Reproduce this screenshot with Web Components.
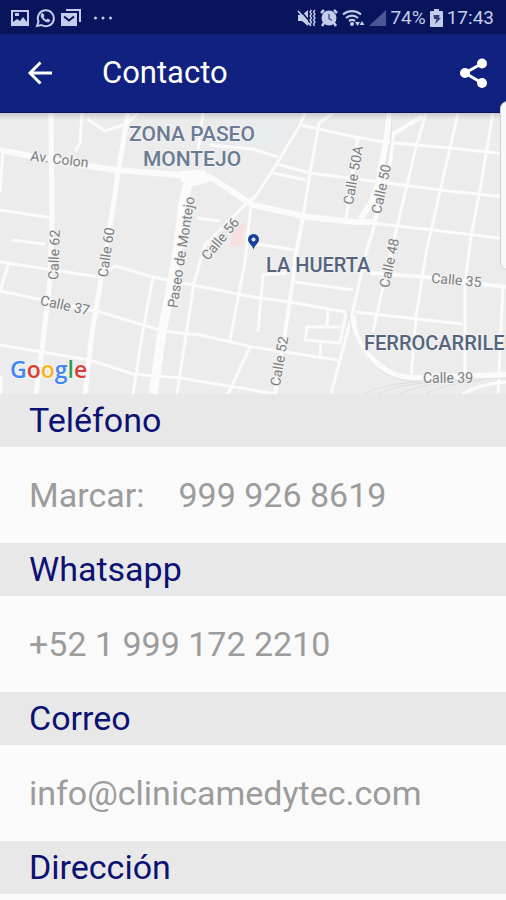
<!DOCTYPE html>
<html lang="es">
<head>
<meta charset="utf-8">
<meta name="viewport" content="width=device-width, initial-scale=1">
<title>Contacto</title>
<style>
  body { margin: 0; background: #fafafa; font-family: Roboto, "Liberation Sans", sans-serif; }
</style>
</head>
<body>
<contact-screen></contact-screen>

<template id="status-bar">
  <style>
    :host { display: flex; align-items: center; justify-content: space-between; height: 34px; padding: 2px 12px 0 11px; box-sizing: border-box; background: #08155c; color: #c5cbea; font-size: 19px; line-height: 24px; }
    div { display: flex; align-items: center; }
    .left { gap: 6px; }
    .right { gap: 4px; }
    svg { display: block; fill: currentColor; }
    .dots { margin-left: 7px; }
  </style>
  <div class="left">
    <svg width="18" height="18" viewBox="0 0 18 18"><path fill-rule="evenodd" d="M0 1h18v16H0zM2 3v10l4-3 3 2 3-4 4 5V3zM4 4h4v3H4z"/></svg>
    <svg width="20" height="20" viewBox="0 0 20 20"><path d="M2 18l1.500-4.500A8 8 0 1 1 6.500 17z" fill="none" stroke="currentColor" stroke-width="2"/><path d="M6.500 5.500l1.500-.5 1.500 3-1 1.200a6 6 0 0 0 2.800 2.600l1.200-1.200 2.700 1.400c0 1.800-1.500 2.500-2.800 2.300C9 13.600 5.600 10 5.700 7.500z"/></svg>
    <svg width="20" height="18" viewBox="0 0 20 18"><path d="M5 0h15v13h-2V2H5z"/><path d="M0 4h16v13H0z"/><path d="M3 7.500l5 4 5-4" fill="none" stroke="#08155c" stroke-width="2"/></svg>
    <svg class="dots" width="18" height="4" viewBox="0 0 18 4"><circle cx="1.500" cy="2" r="1.500"/><circle cx="9" cy="2" r="1.500"/><circle cx="16.500" cy="2" r="1.500"/></svg>
  </div>
  <div class="right">
    <svg width="19" height="18" viewBox="0 0 19 18"><path d="M1 6h4l6-5v16l-6-5H1z"/><path d="M3 1l11 13" stroke="#08155c" stroke-width="1.500"/><path d="M1 2l12 14" stroke="currentColor" stroke-width="1.800"/><path d="M14.500 1l-1.500 2 1.500 2-1.500 2 1.500 2-1.500 2 1.500 2-1.500 2 1 2M18 1l-1.500 2 1.500 2-1.500 2 1.500 2-1.500 2 1.500 2-1.500 2 1 2" fill="none" stroke="currentColor" stroke-width="1.400"/></svg>
    <svg width="18" height="18" viewBox="0 0 18 18"><circle cx="9" cy="9" r="7.500"/><path d="M1 4l3-3M17 4l-3-3M4 14l-2 3M14 14l2 3" stroke="currentColor" stroke-width="2.500"/><path d="M9 5v4.500l3 2" fill="none" stroke="#4d578f" stroke-width="1.500"/></svg>
    <svg width="23" height="18" viewBox="0 0 23 18"><path d="M1 5.500a13.500 13.500 0 0 1 18 0M4 9a9 9 0 0 1 12 0M7 12a5 5 0 0 1 6 0" fill="none" stroke="currentColor" stroke-width="2.200"/><circle cx="10" cy="15" r="2"/><path d="M13 13h5l-2.500 4zM17.500 16h5L20 12z"/></svg>
    <svg width="17" height="18" viewBox="0 0 17 18"><path d="M17 1v16H0z" fill="#4b5794"/></svg>
    <span>74%</span>
    <svg width="13" height="18" viewBox="0 0 13 18"><path d="M4 0h5v2h3q1 0 1 1v14q0 1-1 1H1q-1 0-1-1V3q0-1 1-1h3z"/><path d="M3.500 6h6L9 9h2l-6 6 1.500-5H4z" fill="#303d7d"/></svg>
    <span>17:43</span>
  </div>
</template>

<template id="app-bar">
  <style>
    :host { display: flex; align-items: center; height: 78px; padding: 0 16px 0 26px; background: #10217f; border-bottom: 1px solid #06105c; color: #fff; }
    button { display: block; padding: 0; border: 0; background: none; color: inherit; }
    svg { display: block; }
    h1 { flex: 1; margin: 0 0 0 48px; font-size: 31px; line-height: 40px; font-weight: 400; }
  </style>
  <button aria-label="Volver"><svg width="28" height="28" viewBox="0 0 28 28" fill="none" stroke="#fff" stroke-width="3"><path d="M26 14H5M14.500 3.500L4 14l10.500 10.500"/></svg></button>
  <h1><slot></slot></h1>
  <button aria-label="Compartir"><svg width="34" height="34" viewBox="0 0 34 34"><path d="M26 7.500L9 17l17 10" fill="none" stroke="#fff" stroke-width="3"/><g fill="#fff"><circle cx="26" cy="7.500" r="5"/><circle cx="9" cy="17" r="5"/><circle cx="26" cy="27" r="5"/></g></svg></button>
</template>

<template id="location-map">
  <style>
    :host { display: block; background: #ececec; }
    svg { display: block; width: 100%; height: auto; }
    .roads { fill: none; stroke: #fbfbfb; stroke-width: 3; stroke-linejoin: round; }
    .street { font-size: 14px; fill: #7b7e81; text-anchor: middle; stroke: #f2f2f2; stroke-width: 2; paint-order: stroke; }
    .zone { font-size: 21px; font-weight: 500; fill: #6b7b94; text-anchor: middle; stroke: #f2f2f2; stroke-width: 2; paint-order: stroke; }
    .area { font-size: 20px; font-weight: 500; fill: #55647c; stroke: #f2f2f2; stroke-width: 2; paint-order: stroke; }
    .brand { font-family: "Open Sans", sans-serif; font-size: 23px; font-weight: 600; stroke: #f4f4f4; stroke-width: 2; paint-order: stroke; }
  </style>
  <svg viewBox="0 113 506 281" role="img" aria-label="Mapa de ubicación">
    <defs><linearGradient id="shade" x2="0" y2="1"><stop stop-color="#000" stop-opacity=".14"/><stop offset="1" stop-color="#000" stop-opacity="0"/></linearGradient></defs>
    <path d="M205 113h98l-5 12-24 38-21-14-50-4z" fill="#e9ebed"/>
    <path d="M235 228l10-7-3 25-13 1z" fill="#f9dfde"/>
    <g class="roads">
      <path d="M3 150L0 192M82 113L80 143 75 151M87 119L105 131 123 125M0 210L52 218M12 240L45 244M203 113L198 150M210 145L253 149 278 157M197 218L220 221M138 113L123 127"/>
      <path d="M253 197L205 245 194 283 177 394M251 206L245 262 230 340M250 347L228 394M153 277L143 330 133 394"/>
      <path d="M0 262L100 277 115 266 153 277 193 285 253 297 290 302 346 312M8 265L0 292M0 291L43 300 100 312 163 331 200 335 253 347 338 360M0 345L90 360 133 374 180 378 253 390 275 394"/>
      <path d="M305 113L300 125 276 165 253 200M333 113L319 123 310 173 303 217M300 125L356 137 383 142 450 148 506 154M276 164L310 173 380 182 440 190 506 197M273 173L306 180M358 137L346 219"/>
      <path d="M426 113L416 147 398 223 383 287 373 332M458 113L441 187 426 253 416 317 411 377M493 113L480 190 471 237 465 283 465 375M371 223L433 230 506 239"/>
      <path d="M250 243L296 250M295 282L353 290M286 273L263 275 258 332M328 310L327 325M341 327H307L305 340 340 343 346 313M321 343L320 357M376 220L366 253 352 315 331 394M355 312L463 324M503 287L498 394M1 376V394"/>
      <path stroke-width="4" d="M423 116L393 134 390 163 375 220M370 273L426 277 506 287M303 217L296 253 293 280 285 333 275 394"/>
      <path stroke-width="5" d="M51 113L52 220 50 280 42 350 36 394M128 113L118 173 110 227 101 280 92 333 85 394"/>
      <path stroke-width="6" d="M0 150L60 162 117 170 190 176M190 173L210 177 253 205 308 217 355 222 374 222M390 113L385 147 378 185 370 205 360 219M353 315Q352 345 380 366 394 377 411 378L506 375"/>
      <path stroke-width="9" d="M191 173L183 203 177 253 165 317 162 332 153 394"/>
      <path stroke="#dededf" stroke-width="1" d="M392 113L391 140 384 180M349 312Q350 344 380 370 396 381 414 381L506 378M365 394Q384 383 420 382M378 394Q400 383 440 382M400 394Q425 382 470 380M425 394Q445 383 485 380"/>
      <path d="M462 394Q480 384 506 382"/>
      <path stroke="none" fill="#fbfbfb" d="M178 171L205 170 212 181 194 186 181 181z"/>
    </g>
    <g class="street">
      <text transform="translate(59 164) rotate(7)">Av. Colon</text>
      <text transform="translate(59 255) rotate(-88)">Calle 62</text>
      <text transform="translate(111 253) rotate(-82)">Calle 60</text>
      <text transform="translate(186 253) rotate(-81)">Paseo de Montejo</text>
      <text transform="translate(224 242) rotate(-50)">Calle 56</text>
      <text transform="translate(64 310) rotate(12)">Calle 37</text>
      <text transform="translate(358 176) rotate(-80)">Calle 50A</text>
      <text transform="translate(386 190) rotate(-78)">Calle 50</text>
      <text transform="translate(394 264) rotate(-78)">Calle 48</text>
      <text transform="translate(284 362) rotate(-80)">Calle 52</text>
      <text transform="translate(456 285) rotate(5)">Calle 35</text>
      <text transform="translate(448 383)">Calle 39</text>
    </g>
    <text class="zone" x="192" y="141">ZONA PASEO</text>
    <text class="zone" x="192" y="166">MONTEJO</text>
    <text class="area" x="266" y="272">LA HUERTA</text>
    <text class="area" x="364" y="350">FERROCARRILERA</text>
    <path d="M253.500 249.500C252.500 245 248 243.500 248 239.500a5.500 5.500 0 0 1 11 0c0 4-4.500 5.500-5.500 10z" fill="#17429b"/><circle cx="253.500" cy="239.500" r="2" fill="#dce7ff"/>
    <text class="brand" x="10" y="378"><tspan fill="#4285f4">G</tspan><tspan fill="#dd3d34">o</tspan><tspan fill="#f3b71c">o</tspan><tspan fill="#4285f4">g</tspan><tspan fill="#2e9e4f">l</tspan><tspan fill="#dd3d34">e</tspan></text>
    <rect y="113" width="506" height="7" fill="url(#shade)"/>
  </svg>
</template>

<template id="contact-section">
  <style>
    :host { display: block; }
    h2 { margin: 0; padding: 6px 29px 7px; background: #e8e8e8; color: #0c1273; font-size: 34px; line-height: 40px; font-weight: 400; }
    .body { display: flex; gap: 34px; padding: 28px 29px; color: #9c9c9c; font-size: 34px; line-height: 40px; }
  </style>
  <section><h2><slot name="title"></slot></h2><div class="body"><slot></slot></div></section>
</template>

<template id="contact-screen">
  <style>
    :host { display: block; position: relative; overflow: hidden; background: #fafafa; }
    a { color: inherit; text-decoration: none; }
    .edge { position: absolute; top: 101px; right: -9px; width: 13px; height: 167px; border: 1px solid #cfd0d8; border-radius: 8px; background: #f8f8f8; }
  </style>
  <status-bar></status-bar>
  <app-bar>Contacto</app-bar>
  <main>
    <location-map></location-map>
    <contact-section><span slot="title">Teléfono</span><span>Marcar:</span><a href="tel:9999268619">999 926 8619</a></contact-section>
    <contact-section><span slot="title">Whatsapp</span><a href="https://wa.me/5219991722210">+52 1 999 172 2210</a></contact-section>
    <contact-section><span slot="title">Correo</span><a href="mailto:info@clinicamedytec.com">info@clinicamedytec.com</a></contact-section>
    <contact-section><span slot="title">Dirección</span></contact-section>
  </main>
  <div class="edge"></div>
</template>

<script>
  class TemplateElement extends HTMLElement {
    constructor() {
      super();
      const template = document.getElementById(this.localName);
      this.attachShadow({ mode: "open" }).append(template.content.cloneNode(true));
    }
  }
  for (const name of ["status-bar", "app-bar", "location-map", "contact-section", "contact-screen"]) {
    customElements.define(name, class extends TemplateElement {});
  }
</script>
</body>
</html>
